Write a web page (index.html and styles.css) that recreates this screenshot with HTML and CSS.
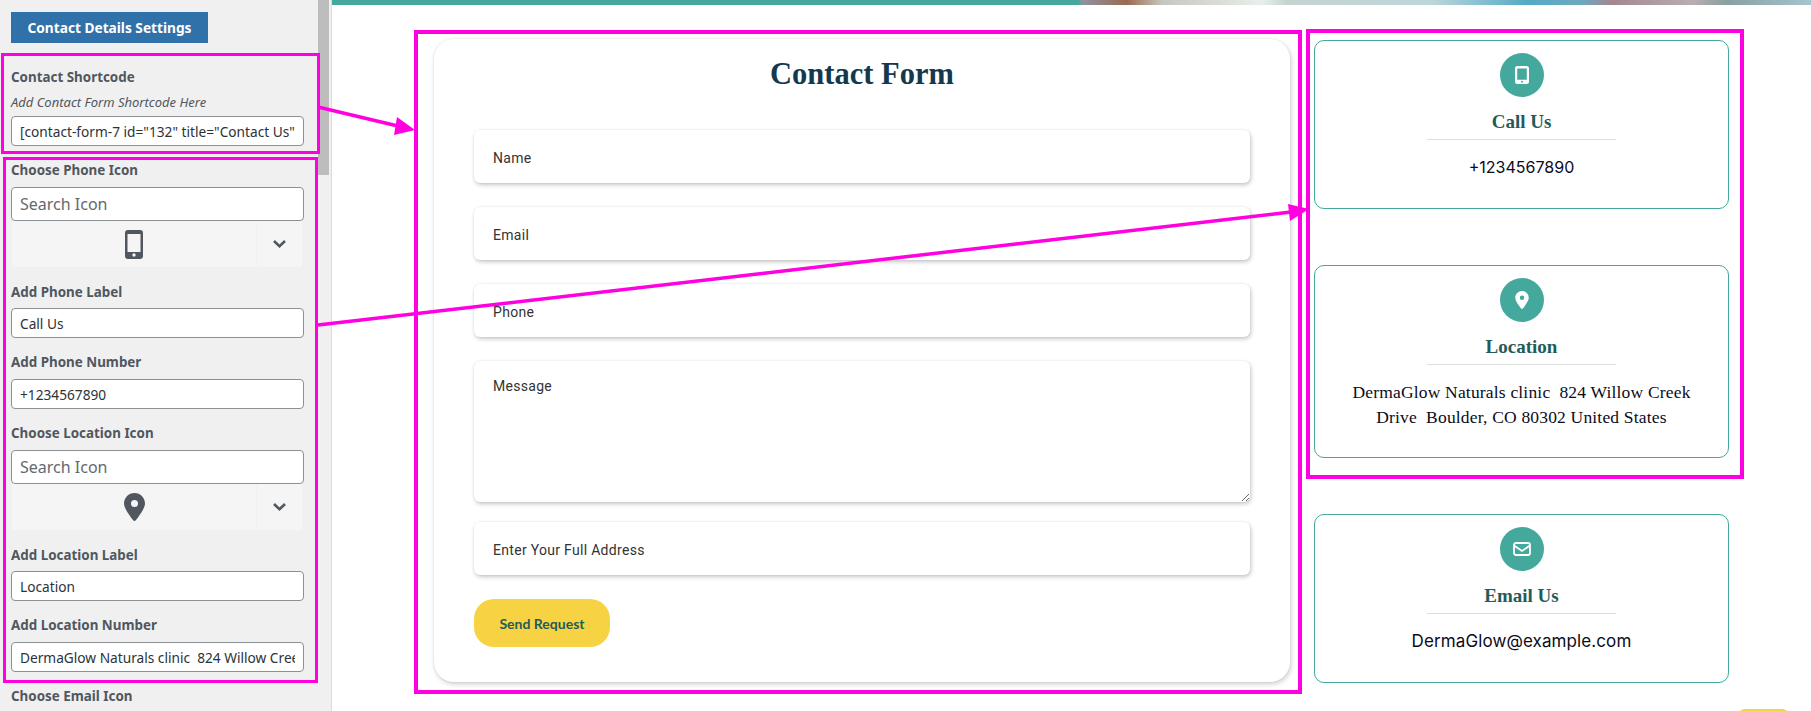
FILE: index.html
```html
<!DOCTYPE html>
<html lang="en">
<head>
    <meta charset="UTF-8">
    <meta name="viewport" content="width=device-width, initial-scale=1.0">
    <title>Contact Details Settings</title>
    <link rel="stylesheet" href="styles.css">
</head>
<body>
    <div class="page">
        <aside class="sidebar">
            <div class="settings">
                <button class="section-btn">Contact Details Settings</button>

                <div class="field field-first">
                    <label>Contact Shortcode</label>
                    <p class="hint">Add Contact Form Shortcode Here</p>
                    <input class="text-input" type="text" value='[contact-form-7 id="132" title="Contact Us"]'>
                </div>

                <div class="field">
                    <label>Choose Phone Icon</label>
                    <input class="search-input" type="text" placeholder="Search Icon">
                    <div class="icon-picker">
                        <div class="icon-current">
                            <svg width="18" height="29" viewBox="0 0 18 29"><path fill="#50575e" fill-rule="evenodd" d="M3 0h12a3 3 0 0 1 3 3v23a3 3 0 0 1-3 3H3a3 3 0 0 1-3-3V3a3 3 0 0 1 3-3zM2.500 4v18h13V4zM9 23.300a1.700 1.700 0 1 0 0 3.400 1.700 1.700 0 0 0 0-3.400z"/></svg>
                        </div>
                        <div class="icon-toggle">
                            <svg width="13" height="8" viewBox="0 0 13 8"><path fill="none" stroke="#50575e" stroke-width="2.600" d="M1 1l5.500 5.200L12 1"/></svg>
                        </div>
                    </div>
                </div>

                <div class="field field-tight">
                    <label>Add Phone Label</label>
                    <input class="text-input" type="text" value="Call Us">
                </div>

                <div class="field">
                    <label>Add Phone Number</label>
                    <input class="text-input" type="text" value="+1234567890">
                </div>

                <div class="field">
                    <label>Choose Location Icon</label>
                    <input class="search-input" type="text" placeholder="Search Icon">
                    <div class="icon-picker">
                        <div class="icon-current">
                            <svg width="21" height="28" viewBox="0 0 384 512"><path fill="#50575e" fill-rule="evenodd" d="M215.700 499.200C267 435 384 279.400 384 192C384 86 298 0 192 0S0 86 0 192c0 87.400 117 243 168.300 307.200c12.300 15.300 35.100 15.300 47.400 0zM192 128a64 64 0 1 1 0 128 64 64 0 1 1 0-128z"/></svg>
                        </div>
                        <div class="icon-toggle">
                            <svg width="13" height="8" viewBox="0 0 13 8"><path fill="none" stroke="#50575e" stroke-width="2.600" d="M1 1l5.500 5.200L12 1"/></svg>
                        </div>
                    </div>
                </div>

                <div class="field field-tight">
                    <label>Add Location Label</label>
                    <input class="text-input" type="text" value="Location">
                </div>

                <div class="field">
                    <label>Add Location Number</label>
                    <input class="text-input" type="text" value="DermaGlow Naturals clinic&nbsp; 824 Willow Creek Drive&nbsp; Boulder, CO 80302 United States">
                </div>

                <div class="field">
                    <label>Choose Email Icon</label>
                </div>
            </div>
            <div class="scrollbar"><div class="scroll-thumb"></div></div>
        </aside>

        <main class="preview">
            <div class="banner"></div>
            <div class="contact-grid">
                <form class="form-card">
                    <h2>Contact Form</h2>
                    <input class="form-field" type="text" placeholder="Name">
                    <input class="form-field" type="text" placeholder="Email">
                    <input class="form-field" type="text" placeholder="Phone">
                    <textarea class="form-field form-message" placeholder="Message"></textarea>
                    <input class="form-field form-address" type="text" placeholder="Enter Your Full Address">
                    <button class="send-btn" type="button">Send Request</button>
                </form>

                <div class="info-list">
                    <div class="info-card">
                        <span class="info-icon">
                            <svg width="14" height="18" viewBox="0 0 14 18"><path fill="#fff" fill-rule="evenodd" d="M2.500 0h9A2.500 2.500 0 0 1 14 2.500v13a2.500 2.500 0 0 1-2.500 2.500h-9A2.500 2.500 0 0 1 0 15.500v-13A2.500 2.500 0 0 1 2.500 0zM2.200 2.400v11.400h9.600V2.400zM7 14.700a1 1 0 1 0 0 2 1 1 0 0 0 0-2z"/></svg>
                        </span>
                        <h3>Call Us</h3>
                        <p class="info-value">+1234567890</p>
                    </div>
                    <div class="info-card">
                        <span class="info-icon">
                            <svg width="14" height="18" viewBox="0 0 384 512"><path fill="#fff" fill-rule="evenodd" d="M215.700 499.200C267 435 384 279.400 384 192C384 86 298 0 192 0S0 86 0 192c0 87.400 117 243 168.300 307.200c12.300 15.300 35.100 15.300 47.400 0zM192 128a64 64 0 1 1 0 128 64 64 0 1 1 0-128z"/></svg>
                        </span>
                        <h3>Location</h3>
                        <p class="info-address">DermaGlow Naturals clinic&nbsp; 824 Willow Creek<br>Drive&nbsp; Boulder, CO 80302 United States</p>
                    </div>
                    <div class="info-card">
                        <span class="info-icon">
                            <svg width="18" height="14" viewBox="0 0 18 14"><rect x="1" y="1" width="16" height="12" rx="2" fill="none" stroke="#fff" stroke-width="1.800"/><path fill="none" stroke="#fff" stroke-width="1.800" d="M1 3.500l8 5.500 8-5.500"/></svg>
                        </span>
                        <h3>Email Us</h3>
                        <p class="info-value info-email">DermaGlow@example.com</p>
                    </div>
                </div>
            </div>
            <div class="back-top"></div>
        </main>

        <!-- annotation boxes and arrows drawn over the screenshot -->
        <svg class="annotations" width="1811" height="711" viewBox="0 0 1811 711">
            <g fill="none" stroke="#ff00e1">
                <rect x="2.500" y="54.500" width="316" height="98" stroke-width="3"/>
                <rect x="4.500" y="158.500" width="312" height="523" stroke-width="3"/>
                <rect x="416" y="32" width="884" height="660" stroke-width="4"/>
                <rect x="1308" y="31" width="434" height="446" stroke-width="4"/>
                <path d="M318 107l84 20" stroke-width="3.500"/>
                <path d="M318 325l973-113" stroke-width="3.500"/>
            </g>
            <g fill="#ff00e1">
                <path d="M415 130l-18 -13 -3 18z"/>
                <path d="M1309 209l-21-5 2 17z"/>
            </g>
        </svg>
    </div>
</body>
</html>
```

FILE: styles.css
```css
* {
    box-sizing: border-box;
}
html, body {
    margin: 0;
    padding: 0;
    height: 711px;
    overflow: hidden;
    background-color: #fff;
}
.page {
    display: flex;
    position: relative;
    width: 1811px;
    height: 711px;
    overflow: hidden;
}

/* settings column */
.sidebar {
    display: flex;
    flex: 0 0 332px;
    height: 711px;
    overflow: hidden;
    background-color: #f0f0f0;
    border-right: 1px solid #dcdcde;
    font-family: "Noto Sans", sans-serif;
    color: #50575e;
}
.settings {
    width: 318px;
    padding: 12px 14px 0 11px;
}
.scrollbar {
    width: 11px;
}
.scroll-thumb {
    height: 175px;
    background-color: #bdbdbd;
}
.section-btn {
    display: block;
    width: 197px;
    height: 31px;
    padding: 0;
    border: none;
    background-color: #3071a9;
    color: #fff;
    font-family: "Noto Sans", sans-serif;
    font-size: 13.700px;
    font-weight: 700;
}
.field {
    margin-top: 15px;
}
.field-first {
    margin-top: 25px;
}
.field label {
    display: block;
    margin-bottom: 8px;
    font-size: 13.400px;
    font-weight: 700;
    line-height: 18px;
}
.field-tight {
    margin-top: 16px;
}
.field-tight label {
    margin-bottom: 7px;
}
.hint {
    margin: 0 0 6px;
    font-size: 13px;
    font-style: italic;
    line-height: 16px;
}
.text-input, .search-input {
    display: block;
    width: 293px;
    padding: 0 8px;
    border: 1px solid #8c8f94;
    border-radius: 4px;
    background-color: #fff;
    font-family: "Noto Sans", sans-serif;
    color: #2c3338;
}
.text-input {
    height: 30px;
    font-size: 13.700px;
}
.search-input {
    height: 34px;
    font-size: 16px;
}
.search-input::placeholder {
    color: #646970;
    opacity: 1;
}
.icon-picker {
    display: flex;
    width: 290px;
    height: 46px;
    margin-left: 1px;
    background-color: #f5f5f5;
}
.icon-current {
    display: flex;
    flex: 1;
    align-items: center;
    justify-content: center;
}
.icon-toggle {
    display: flex;
    flex: 0 0 46px;
    align-items: center;
    justify-content: center;
    border-left: 1px solid #f0f0f0;
}

/* preview side */
.preview {
    position: relative;
    flex: 1;
}
.banner {
    height: 5px;
    background: linear-gradient(90deg, #44a99c 0, #44a99c 746px, #8e93a0 750px, #9a6a50 795px, #c8c6be 830px, #e8efea 930px, #c5d3d0 955px, #bcd6da 1100px, #55aac7 1195px, #6ea8c0 1250px, #a58690 1280px, #b8aeb2 1360px, #88a0a0 1395px, #a5c5d0 1479px);
}
.contact-grid {
    display: grid;
    grid-template-columns: 856px 415px;
    gap: 24px;
    padding: 34px 0 0 102px;
}
.form-card {
    display: flex;
    flex-direction: column;
    height: 643px;
    padding: 0 40px;
    border-radius: 20px;
    background-color: #fff;
    box-shadow: 1px 2px 5px rgba(0, 0, 0, 0.2), 0 0 2px rgba(0, 0, 0, 0.08);
}
.form-card h2 {
    height: 91px;
    margin: 0;
    padding-top: 15px;
    text-align: center;
    font-family: "Liberation Serif", serif;
    font-size: 30.500px;
    font-weight: 700;
    line-height: 40px;
    color: #14394f;
}
.form-field {
    display: block;
    width: 776px;
    height: 53px;
    margin-bottom: 24px;
    padding: 2px 19px 0;
    border: none;
    border-radius: 6px;
    background-color: #fff;
    box-shadow: 1px 2px 4px rgba(0, 0, 0, 0.22), 0 0 2px rgba(0, 0, 0, 0.08);
    font-family: Roboto, sans-serif;
    font-size: 14px;
    letter-spacing: 0.300px;
    outline: none;
}
.form-field::placeholder {
    color: #333;
    opacity: 1;
}
.form-message {
    height: 141px;
    margin-bottom: 20px;
    padding: 17px 19px;
    resize: vertical;
}
.send-btn {
    width: 136px;
    height: 48px;
    padding: 0;
    border: none;
    border-radius: 20px;
    background-color: #f7d344;
    color: #1f5c5a;
    font-family: Lato, sans-serif;
    font-size: 14px;
    font-weight: 700;
}
.info-list {
    display: flex;
    flex-direction: column;
    gap: 56px;
    padding-top: 1px;
}
.info-card {
    padding: 12px 10px 27.500px;
    border: 1px solid #44a99c;
    border-radius: 10px;
    text-align: center;
}
.info-icon {
    display: flex;
    align-items: center;
    justify-content: center;
    width: 44px;
    height: 44px;
    margin: 0 auto;
    border-radius: 50%;
    background-color: #44a99c;
}
.info-card h3 {
    width: 189px;
    margin: 12px auto 0;
    padding-bottom: 4px;
    border-bottom: 1px solid #ddd;
    font-family: "Liberation Serif", serif;
    font-size: 19px;
    font-weight: 700;
    line-height: 26px;
    color: #1f5c5a;
}
.info-value {
    margin: 15px 0 0;
    font-family: Inter, sans-serif;
    font-size: 16px;
    line-height: 25px;
    color: #0b0b1a;
}
.info-email {
    font-size: 17px;
    letter-spacing: 0.100px;
}
.info-address {
    margin: 15px 0 0;
    font-family: "Liberation Serif", serif;
    font-size: 17.500px;
    letter-spacing: 0.180px;
    line-height: 25px;
    color: #0b0b1a;
}
.back-top {
    position: absolute;
    left: 1405px;
    top: 709px;
    width: 53px;
    height: 40px;
    border-radius: 8px;
    background-color: #f7d344;
}
.annotations {
    position: absolute;
    left: 0;
    top: 0;
    pointer-events: none;
}
```
